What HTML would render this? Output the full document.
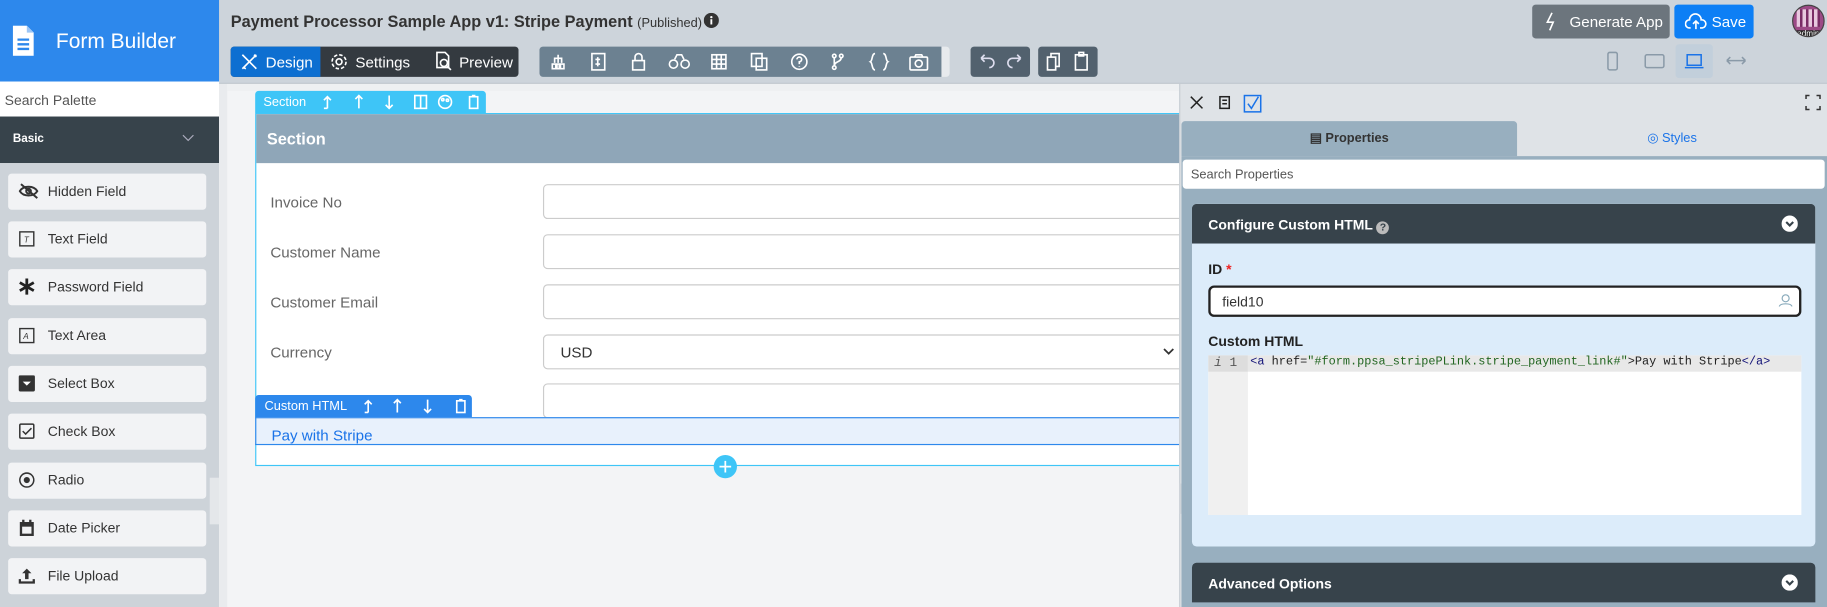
<!DOCTYPE html>
<html><head><meta charset="utf-8"><style>
*{box-sizing:border-box;margin:0;padding:0}
html,body{width:1827px;height:607px;overflow:hidden;background:#f3f4f6;font-family:"Liberation Sans",Arial,sans-serif}
#r{position:absolute;left:0;top:0;width:1568px;height:521px;transform:scale(1.16518);transform-origin:0 0;overflow:hidden;background:#f3f4f6}
.a{position:absolute}
.ic{position:absolute;stroke:#fff;fill:none;stroke-width:1.4}
.item{position:absolute;left:7px;width:170px;height:31px;background:#f2f3f5;border-radius:3px;font-size:12px;color:#333;line-height:31px;padding-left:34px}
.item svg{position:absolute;left:9px;top:8px}
.lbl{position:absolute;left:232px;font-size:13px;color:#666}
.inp{position:absolute;left:466px;width:560px;height:30px;border:1px solid #ccc;border-radius:4px;background:#fff}
</style></head><body><div id="r">
<div class="a" style="left:188px;top:0;width:1380px;height:72px;background:#cdd4db;border-bottom:1px solid #bfc6cd"></div>
<div class="a" style="left:198px;top:10px;font-size:14px;font-weight:bold;color:#333">Payment Processor Sample App v1: Stripe Payment <span style="font-size:11px;font-weight:normal">(Published)</span></div>
<svg class="a" style="left:604px;top:11px" width="13" height="13"><circle cx="6.5" cy="6.5" r="6.5" fill="#333"/><rect x="5.7" y="5.5" width="1.6" height="4.5" fill="#fff"/><circle cx="6.5" cy="3.7" r="1" fill="#fff"/></svg>
<div class="a" style="left:198px;top:40px;width:247px;height:26px;background:#343a40;border-radius:3px"></div>
<div class="a" style="left:198px;top:40px;width:77px;height:26px;background:#0d6fd1;border-radius:3px 0 0 3px"></div>
<div class="a" style="left:228px;top:46px;font-size:13px;color:#fff">Design</div>
<svg class="ic" style="left:206px;top:45px" width="16" height="16"><path d="M2 2l12 12M14 2L2 14M3 13l2 1M12 2l2 2"/></svg>
<div class="a" style="left:305px;top:46px;font-size:13px;color:#fff">Settings</div>
<svg class="ic" style="left:283px;top:45px" width="16" height="16"><circle cx="8" cy="8" r="2.5"/><circle cx="8" cy="8" r="6" stroke-dasharray="3 1.7"/></svg>
<div class="a" style="left:394px;top:46px;font-size:13px;color:#fff">Preview</div>
<svg class="ic" style="left:372px;top:44px" width="17" height="17"><path d="M3 1h7l3 3v10H3z"/><circle cx="9" cy="10" r="3"/><path d="M11 12l4 4"/></svg>
<div class="a" style="left:463px;top:40px;width:345px;height:26px;background:#6c8191;border-radius:3px 0 0 3px"></div>
<div class="a" style="left:808px;top:40px;width:7px;height:26px;background:#e7eaed;border-radius:0 3px 3px 0"></div>
<svg class="ic" style="left:471px;top:45px" width="330" height="16">
<path d="M8 2v3h-3v4M8 5h3v4M8 5v4M3 10h3v4H3zM7 10h2v4H7zM10 10h3v4h-3z"/>
<rect x="37" y="1" width="11" height="14"/><path d="M42 4v8M40 6h4M40 10h4"/>
<rect x="72" y="7" width="10" height="8"/><path d="M74 7V4a3 3 0 0 1 6 0v3"/>
<circle cx="107" cy="10" r="3.5"/><circle cx="117" cy="10" r="3.5"/><path d="M108 6l2-4h4l2 4"/>
<rect x="140" y="2" width="12" height="12"/><path d="M144 2v12M148 2v12M140 6h12M140 10h12"/>
<rect x="174" y="1" width="9" height="11"/><rect x="178" y="5" width="9" height="10"/>
<circle cx="215" cy="8" r="6.5"/><path d="M213 6a2 2 0 1 1 2 2v2M215 12v.5"/>
<circle cx="245" cy="3" r="1.5"/><circle cx="245" cy="13" r="1.5"/><circle cx="251" cy="3" r="1.5"/><path d="M245 4.5v7M251 4.5c0 4-6 3-6 7"/>
<path d="M280 1c-3 0-2 6-4 7 2 1 1 7 4 7M287 1c3 0 2 6 4 7-2 1-1 7-4 7"/>
<rect x="310" y="4" width="15" height="11" rx="1"/><circle cx="317.5" cy="9.5" r="3"/><path d="M314 4l1-2h5l1 2"/>
</svg>
<div class="a" style="left:833px;top:40px;width:51px;height:26px;background:#52616e;border-radius:3px"></div>
<svg class="ic" style="left:838px;top:45px" width="44" height="16"><path d="M4 5h7a4 4 0 0 1 0 8M4 5l3-3M4 5l3 3M38 5h-7a4 4 0 0 0 0 8M38 5l-3-3M38 5l-3 3" stroke="#dde"/></svg>
<div class="a" style="left:891px;top:40px;width:51px;height:26px;background:#52616e;border-radius:3px"></div>
<svg class="ic" style="left:896px;top:44px" width="42" height="18"><rect x="3" y="5" width="7" height="11"/><path d="M6 5V2h7v11h-3"/><rect x="27" y="3" width="10" height="13"/><rect x="30" y="1" width="4" height="3"/></svg>
<div class="a" style="left:1315px;top:4px;width:118px;height:29px;background:#6c757d;border-radius:3px;color:#fff;font-size:13px;line-height:29px;padding-left:32px">Generate App</div>
<svg class="ic" style="left:1325px;top:10px" width="12" height="17"><path d="M7 1L3 9h5l-3 7"/></svg>
<div class="a" style="left:1437px;top:4px;width:68px;height:29px;background:#0d7ff5;border-radius:3px;color:#fff;font-size:13px;line-height:29px;padding-left:32px">Save</div>
<svg class="ic" style="left:1446px;top:11px" width="20" height="15"><path d="M5 13H4a3.5 3.5 0 0 1 0-7 5 5 0 0 1 10 0 3.5 3.5 0 0 1 1 7h-2M9.5 14V7M7 9.5l2.5-2.5 2.5 2.5"/></svg>
<div class="a" style="left:1538px;top:4px;width:28px;height:28px;border-radius:50%;background:#9c4a86;border:1px solid #444;overflow:hidden"><div style="margin:3px;height:15px;background:repeating-linear-gradient(90deg,#e8c8df 0 3px,#7a2c66 3px 5px)"></div><div style="font-size:7px;color:#fff;background:#222;text-align:center">admin</div></div>
<svg class="a" style="left:1376px;top:43px" width="130" height="20" fill="none" stroke="#8a9aa8" stroke-width="1.3"><rect x="4" y="2" width="8" height="15" rx="1.5"/><rect x="36" y="4" width="16" height="11" rx="1.5"/></svg>
<div class="a" style="left:1438px;top:38px;width:32px;height:29px;background:#c2cfdb;border-radius:3px"></div>
<svg class="a" style="left:1444px;top:43px" width="60" height="20" fill="none" stroke-width="1.3"><path d="M4 4h12v9H4zM2 15h16" stroke="#1a73e8"/><path d="M38 9h16M38 9l3-3M38 9l3 3M54 9l-3-3M54 9l-3 3" stroke="#8a9aa8"/></svg>

<div class="a" style="left:0;top:0;width:188px;height:70px;background:#2d88ec"></div>
<svg class="a" style="left:11px;top:22px" width="18" height="26"><path d="M0 0h12l6 6v20H0z" fill="#fff"/><path d="M12 0v6h6" fill="#9cc6f6"/><path d="M4 12h10M4 16h10M4 20h10" stroke="#2d88ec" stroke-width="2"/></svg>
<div class="a" style="left:48px;top:25px;font-size:18px;color:#fff">Form Builder</div>
<div class="a" style="left:0;top:70px;width:188px;height:30px;background:#fff;font-size:12px;color:#555;padding:9px 0 0 4px">Search Palette</div>
<div class="a" style="left:0;top:100px;width:188px;height:40px;background:#37434b"></div>
<div class="a" style="left:11px;top:114px;font-size:10px;font-weight:bold;color:#fff">Basic</div>
<svg class="a" style="left:156px;top:115px" width="11" height="8"><path d="M1 1l4.5 4.5L10 1" stroke="#aab" fill="none"/></svg>
<div class="a" style="left:0;top:140px;width:188px;height:381px;background:#cdd3d9"></div>
<div class="a" style="left:180px;top:410px;width:8px;height:40px;background:#e4e7ea"></div>
<div class="a" style="left:188px;top:72px;width:7px;height:449px;background:#e9ebee"></div>
<div class="item" style="top:149px"><svg width="17" height="14" fill="none" stroke="#333" stroke-width="1.7"><path d="M1 7c3-5 12-5 15 0-3 5-12 5-15 0z"/><circle cx="8.5" cy="7" r="2"/><path d="M2 1l14 12"/></svg>Hidden Field</div>
<div class="item" style="top:190px"><svg width="14" height="14" fill="none" stroke="#333" stroke-width="1.2"><rect x="1" y="1" width="12" height="12"/><text x="4.5" y="10" font-size="7" fill="#333" stroke="none" font-style="italic">T</text></svg>Text Field</div>
<div class="item" style="top:231px"><svg width="14" height="14" stroke="#222" stroke-width="2.4"><path d="M7 0v14M1 3.5l12 7M13 3.5l-12 7"/></svg>Password Field</div>
<div class="item" style="top:273px"><svg width="14" height="14" fill="none" stroke="#333" stroke-width="1.2"><rect x="1" y="1" width="12" height="12"/><text x="4" y="10" font-size="7" fill="#333" stroke="none" font-style="italic">A</text></svg>Text Area</div>
<div class="item" style="top:314px"><svg width="14" height="14"><rect x="0" y="0" width="14" height="14" rx="1.5" fill="#333"/><path d="M3.5 5.5h7L7 9z" fill="#fff"/></svg>Select Box</div>
<div class="item" style="top:355px"><svg width="14" height="14" fill="none" stroke="#333" stroke-width="1.3"><rect x="1" y="1" width="12" height="12" rx="1"/><path d="M3.5 7l2.5 2.5 5-5"/></svg>Check Box</div>
<div class="item" style="top:397px"><svg width="14" height="14" fill="none" stroke="#333" stroke-width="1.3"><circle cx="7" cy="7" r="6"/><circle cx="7" cy="7" r="2" fill="#333"/></svg>Radio</div>
<div class="item" style="top:438px"><svg width="14" height="15"><rect x="1" y="2" width="12" height="12" fill="#333"/><rect x="3" y="6" width="8" height="6" fill="#f2f3f5"/><path d="M4 0v3M10 0v3" stroke="#333" stroke-width="2"/></svg>Date Picker</div>
<div class="item" style="top:479px"><svg width="14" height="14"><path d="M1 10v3h12v-3" stroke="#333" stroke-width="2" fill="none"/><path d="M7 1l4 4H8.5v5h-3V5H3z" fill="#333"/></svg>File Upload</div>

<div class="a" style="left:195px;top:72px;width:817px;height:6px;background:#eef0f2"></div>
<div class="a" style="left:219px;top:78px;width:198px;height:19px;background:#3ec5f7;border-radius:3px 3px 0 0"></div>
<div class="a" style="left:226px;top:82px;font-size:11px;color:#fff">Section</div>
<svg class="ic" style="left:276px;top:80px" width="140" height="15"><path d="M5 13V3M2 6l3-3 3 3M2 13h3"/><path d="M32 13V2M29 5l3-3 3 3"/><path d="M58 2v11M55 10l3 3 3-3"/><rect x="80" y="2" width="10" height="11"/><path d="M85 2v11"/><circle cx="106" cy="7.5" r="5.5"/><circle cx="104" cy="5.5" r="1"/><circle cx="108" cy="6" r="1"/><rect x="127" y="3" width="7" height="10"/><path d="M129 2h3"/></svg>
<div class="a" style="left:219px;top:97px;width:800px;height:303px;border:1px solid #3ec5f7;background:#fff"></div>
<div class="a" style="left:220px;top:98px;width:800px;height:42px;background:#8fa6b8"></div>
<div class="a" style="left:229px;top:111px;font-size:14px;font-weight:bold;color:#fff">Section</div>
<div class="lbl" style="top:166px">Invoice No</div>
<div class="lbl" style="top:209px">Customer Name</div>
<div class="lbl" style="top:252px">Customer Email</div>
<div class="lbl" style="top:295px">Currency</div>
<div class="inp" style="top:158px"></div>
<div class="inp" style="top:201px"></div>
<div class="inp" style="top:244px"></div>
<div class="inp" style="top:287px"><span style="position:absolute;left:14px;top:7px;font-size:13px;color:#333">USD</span></div>
<svg class="a" style="left:998px;top:298px" width="10" height="8"><path d="M1 1.5l4 4 4-4" stroke="#333" stroke-width="1.5" fill="none"/></svg>
<div class="inp" style="top:329px"></div>
<div class="a" style="left:219px;top:339px;width:186px;height:19px;background:#2d88ec;border-radius:3px 3px 0 0"></div>
<div class="a" style="left:227px;top:343px;font-size:11px;color:#fff">Custom HTML</div>
<svg class="ic" style="left:308px;top:341px" width="95" height="15"><path d="M8 13V3M5 6l3-3 3 3M5 13h3"/><path d="M33 13V2M30 5l3-3 3 3"/><path d="M59 2v11M56 10l3 3 3-3"/><rect x="84" y="3" width="7" height="10"/><path d="M86 2h3"/></svg>
<div class="a" style="left:219px;top:358px;width:800px;height:24px;background:#e8f1fc;border:1px solid #2d88ec;border-right:none"></div>
<div class="a" style="left:233px;top:366px;font-size:13px;color:#1a73e8">Pay with Stripe</div>
<svg class="a" style="left:612px;top:390px" width="21" height="21"><circle cx="10.5" cy="10.5" r="10" fill="#3ec5f7"/><path d="M10.5 5.5v10M5.5 10.5h10" stroke="#fff" stroke-width="1.5"/></svg>

<div class="a" style="left:1012px;top:72px;width:556px;height:449px;background:#dfe3e7;border-left:1px solid #c8ced4"></div>
<div class="a" style="left:1012px;top:415px;width:8px;height:26px;background:#cfd4d9"></div>
<svg class="a" style="left:1020px;top:81px" width="70" height="16" fill="none" stroke="#222" stroke-width="1.3"><path d="M2 2l10 10M12 2L2 12"/><rect x="27" y="2" width="8" height="10"/><path d="M29 5h4M29 8h4"/><rect x="48" y="1" width="14" height="14" stroke="#1a73e8"/><path d="M51 8l3 4 6-10" stroke="#1a73e8"/></svg>
<svg class="a" style="left:1549px;top:81px" width="14" height="14" fill="none" stroke="#333" stroke-width="1.3"><path d="M1 4V1h3M10 1h3v3M13 10v3h-3M4 13H1v-3"/></svg>
<div class="a" style="left:1014px;top:104px;width:288px;height:30px;background:#98afbf;border-radius:3px 3px 0 0;font-size:11px;font-weight:bold;color:#333;text-align:center;line-height:30px">▤ Properties</div>
<div class="a" style="left:1302px;top:104px;width:266px;height:30px;font-size:11px;color:#1a73e8;text-align:center;line-height:30px">◎ Styles</div>
<div class="a" style="left:1014px;top:134px;width:554px;height:387px;background:#98afbf"></div>
<div class="a" style="left:1015px;top:137px;width:551px;height:25px;background:#fff;border-radius:3px;font-size:11px;color:#555;padding:7px 0 0 7px">Search Properties</div>
<div class="a" style="left:1023px;top:175px;width:535px;height:294px;background:#dcecfa;border-radius:4px;overflow:hidden"><div style="height:34px;background:#37434b"></div></div>
<div class="a" style="left:1037px;top:186px;font-size:12px;font-weight:bold;color:#fff">Configure Custom HTML <span style="display:inline-block;width:11px;height:11px;border-radius:50%;background:#bbb;color:#37434b;font-size:9px;text-align:center;line-height:11px;vertical-align:-1px">?</span></div>
<svg class="a" style="left:1529px;top:185px" width="14" height="14"><circle cx="7" cy="7" r="7" fill="#fff"/><path d="M4 5.5l3 3 3-3" stroke="#37434b" stroke-width="1.8" fill="none"/></svg>
<div class="a" style="left:1037px;top:224px;font-size:12px;font-weight:bold;color:#222">ID <span style="color:#e22">*</span></div>
<div class="a" style="left:1037px;top:245px;width:509px;height:27px;background:#fff;border:2px solid #222;border-radius:5px;font-size:12px;color:#333;padding:5px 0 0 10px">field10</div>
<svg class="a" style="left:1526px;top:251px" width="13" height="13" fill="none" stroke="#8ab" stroke-width="1"><circle cx="6.5" cy="5" r="3"/><path d="M1 12c1-3 10-3 11 0"/></svg>
<div class="a" style="left:1037px;top:286px;font-size:12px;font-weight:bold;color:#222">Custom HTML</div>
<div class="a" style="left:1037px;top:305px;width:509px;height:137px;background:#fff"></div>
<div class="a" style="left:1037px;top:305px;width:34px;height:137px;background:#f0f0f0"></div>
<div class="a" style="left:1037px;top:305px;width:34px;height:14px;background:#ddd;font-size:11px;color:#555;font-family:'Liberation Mono',monospace;line-height:14px;padding-left:5px"><i>i</i> 1</div>
<div class="a" style="left:1071px;top:305px;width:475px;height:14px;background:#e8e8e8;font-size:10.2px;font-family:'Liberation Mono',monospace;line-height:14px;padding-left:2px;color:#222;white-space:pre"><span style="color:#117">&lt;a</span> href=<span style="color:#262">"#form.ppsa_stripePLink.stripe_payment_link#"</span>&gt;Pay with Stripe<span style="color:#117">&lt;/a&gt;</span></div>
<div class="a" style="left:1023px;top:483px;width:535px;height:34px;background:#37434b;border-radius:4px 4px 0 0"></div>
<div class="a" style="left:1037px;top:494px;font-size:12px;font-weight:bold;color:#fff">Advanced Options</div>
<svg class="a" style="left:1529px;top:493px" width="14" height="14"><circle cx="7" cy="7" r="7" fill="#fff"/><path d="M4 5.5l3 3 3-3" stroke="#37434b" stroke-width="1.8" fill="none"/></svg>
</div></body></html>
